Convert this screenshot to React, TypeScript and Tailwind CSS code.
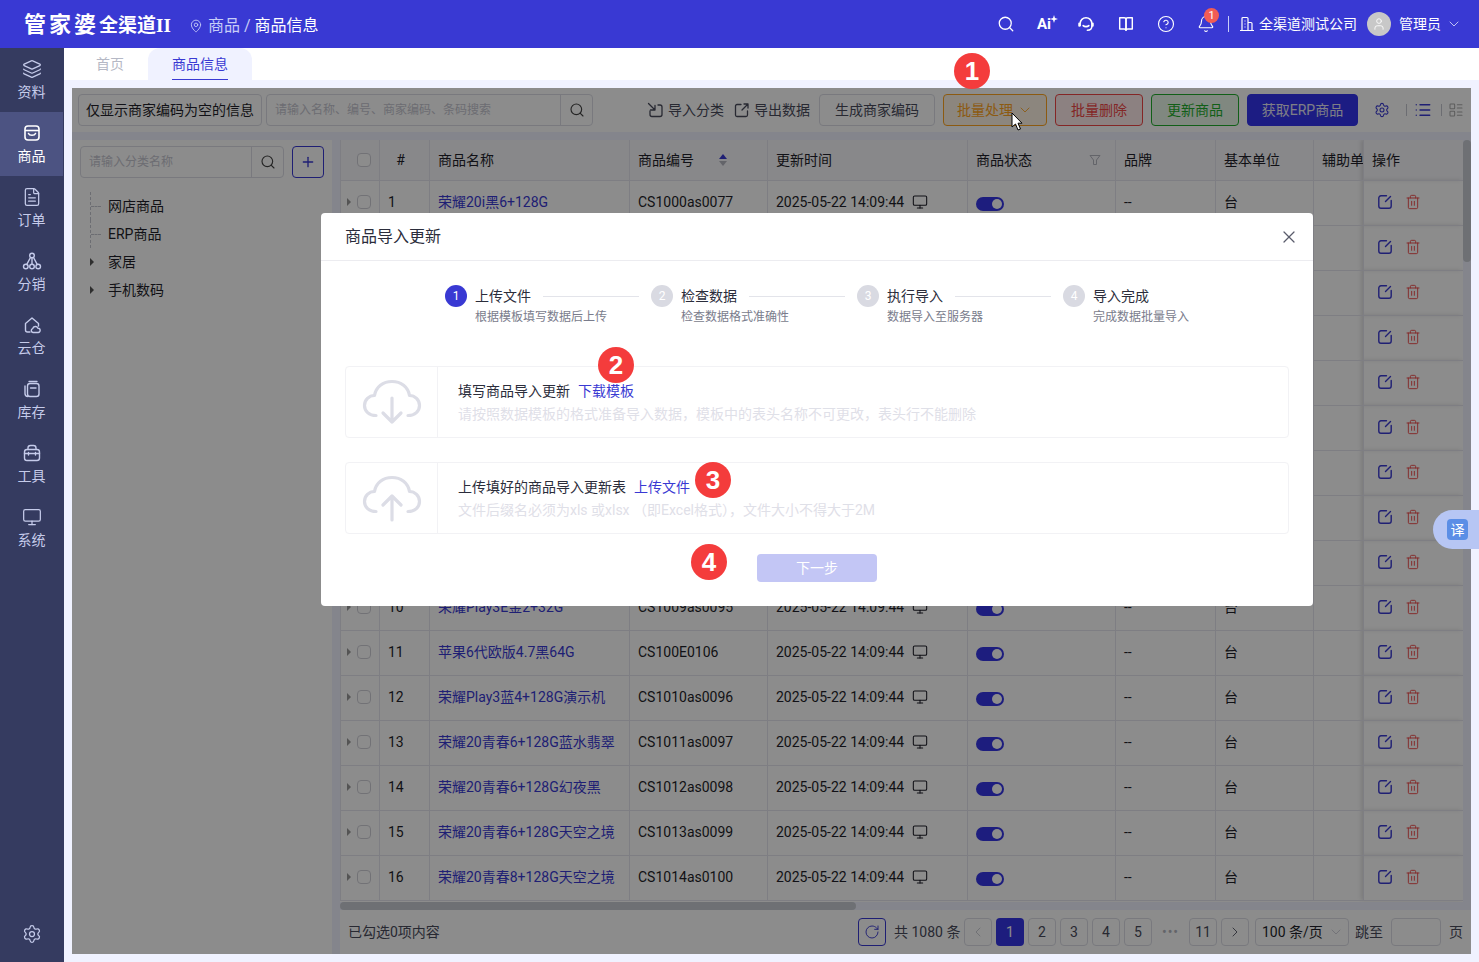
import {
  Search, CircleHelp, Bell, Layers, FileText, Monitor, Settings, ChevronDown, ChevronLeft, ChevronRight,
  Plus, List, X, RotateCw, Trash2, User, MapPin, LayoutList,
} from "lucide-react";

const navItems = [
  { label: "资料", icon: <Layers className="w-5 h-5" strokeWidth={1.5} /> },
  { label: "商品", active: true, icon: <BagIcon /> },
  { label: "订单", icon: <FileText className="w-5 h-5" strokeWidth={1.5} /> },
  { label: "分销", icon: <TreeIcon /> },
  { label: "云仓", icon: <CloudHouseIcon /> },
  { label: "库存", icon: <StockIcon /> },
  { label: "工具", icon: <ToolboxIcon /> },
  { label: "系统", icon: <Monitor className="w-5 h-5" strokeWidth={1.5} /> },
];

const rows = [
  ["荣耀20i黑6+128G", "CS1000as0077"],
  ["荣耀20i蓝6+128G", "CS1001as0078"],
  ["荣耀20i红6+128G", "CS1002as0079"],
  ["荣耀20黑8+128G", "CS1003as0080"],
  ["荣耀20蓝8+128G", "CS1004as0081"],
  ["荣耀Play3黑4+64G", "CS1005as0082"],
  ["荣耀Play3蓝4+64G", "CS1006as0083"],
  ["荣耀Play3E黑2+32G", "CS1007as0084"],
  ["荣耀Play3E蓝2+32G", "CS1008as0085"],
  ["荣耀Play3E金2+32G", "CS1009as0095"],
  ["苹果6代欧版4.7黑64G", "CS100E0106"],
  ["荣耀Play3蓝4+128G演示机", "CS1010as0096"],
  ["荣耀20青春6+128G蓝水翡翠", "CS1011as0097"],
  ["荣耀20青春6+128G幻夜黑", "CS1012as0098"],
  ["荣耀20青春6+128G天空之境", "CS1013as0099"],
  ["荣耀20青春8+128G天空之境", "CS1014as0100"],
];

const steps = [
  { title: "上传文件", sub: "根据模板填写数据后上传" },
  { title: "检查数据", sub: "检查数据格式准确性" },
  { title: "执行导入", sub: "数据导入至服务器" },
  { title: "导入完成", sub: "完成数据批量导入" },
];

function BagIcon() {
  return (
    <svg viewBox="0 0 20 20" className="w-5 h-5" fill="none" stroke="currentColor" strokeWidth="1.6">
      <rect x="3" y="3" width="14" height="14" rx="3" />
      <path d="M3 7.500h14" />
      <path d="M6.500 10.500c1 2.400 6 2.400 7 0" strokeLinecap="round" />
    </svg>
  );
}

function TreeIcon() {
  return (
    <svg viewBox="0 0 20 20" className="w-5 h-5" fill="none" stroke="currentColor" strokeWidth="1.4">
      <circle cx="10" cy="4.500" r="2.300" />
      <circle cx="3.800" cy="15.500" r="2.300" />
      <circle cx="10" cy="15.500" r="2.300" />
      <circle cx="16.200" cy="15.500" r="2.300" />
      <path d="M10 7v6M8.500 6.500l-3.700 6.800M11.500 6.500l3.700 6.800" />
    </svg>
  );
}

function CloudHouseIcon() {
  return (
    <svg viewBox="0 0 20 20" className="w-5 h-5" fill="none" stroke="currentColor" strokeWidth="1.4" strokeLinecap="round" strokeLinejoin="round">
      <path d="M8 17H5.500A2 2 0 0 1 3.500 15V8.500L10 3l6.500 5.500V11" />
      <path d="M11 17.500a2 2 0 0 1-.3-3.900 2.700 2.700 0 0 1 5.200-.3 2.100 2.100 0 0 1 .3 4.200z" />
    </svg>
  );
}

function StockIcon() {
  return (
    <svg viewBox="0 0 20 20" className="w-5 h-5" fill="none" stroke="currentColor" strokeWidth="1.4" strokeLinecap="round">
      <rect x="5.500" y="4.500" width="11.500" height="13" rx="2.500" />
      <path d="M3 7v7.500A3 3 0 0 0 6 17.500" />
      <path d="M7 2.500h8" />
      <path d="M8.500 9h5.500" />
    </svg>
  );
}

function ToolboxIcon() {
  return (
    <svg viewBox="0 0 20 20" className="w-5 h-5" fill="none" stroke="currentColor" strokeWidth="1.4" strokeLinecap="round">
      <rect x="2.500" y="6.500" width="15" height="11" rx="2.500" />
      <path d="M6 6.500V5a2.500 2.500 0 0 1 2.500-2.500h3A2.500 2.500 0 0 1 14 5v1.500" />
      <path d="M2.500 10.500h15M6.500 9.500v2.500M13.500 9.500v2.500" />
    </svg>
  );
}

function HeadsetIcon() {
  return (
    <svg viewBox="0 0 20 20" className="w-[18px] h-[18px]" fill="none" stroke="currentColor" strokeWidth="1.7" strokeLinecap="round">
      <path d="M3.500 12V9.500a6.500 6.500 0 0 1 13 0V12" />
      <path d="M16.500 12.500c0 2.500-2 4.500-5 4.500" />
      <path d="M6.800 11.800c1.500 1.500 4.900 1.500 6.400 0" />
      <path d="M2.500 9.500v2.500M17.500 9.500v2.500" strokeWidth="2.200" />
    </svg>
  );
}

function BookIcon() {
  return (
    <svg viewBox="0 0 20 20" className="w-[18px] h-[18px]" fill="none" stroke="currentColor" strokeWidth="1.6" strokeLinejoin="round">
      <path d="M3 3h5c1 0 2 .6 2 1.600V17c0-.8-1-1.500-2-1.500H3z" />
      <path d="M17 3h-5c-1 0-2 .6-2 1.600V17c0-.8 1-1.500 2-1.500h5z" />
    </svg>
  );
}

function BuildingIcon() {
  return (
    <svg viewBox="0 0 16 16" className="w-4 h-4" fill="none" stroke="currentColor" strokeWidth="1.2">
      <path d="M3 14.500V2.500A1 1 0 0 1 4 1.500h4a1 1 0 0 1 1 1v12" />
      <path d="M9 6.500h3a1 1 0 0 1 1 1v7" />
      <path d="M1 14.500h14M5.500 5h1M5.500 8h1M5.500 11h1" />
    </svg>
  );
}

function EditIcon() {
  return (
    <svg viewBox="0 0 16 16" className="w-4 h-4 text-[#3939d3]" fill="none" stroke="currentColor" strokeWidth="1.4" strokeLinecap="round">
      <path d="M9.500 1.800H4A2.200 2.200 0 0 0 1.800 4v8A2.200 2.200 0 0 0 4 14.200h8a2.200 2.200 0 0 0 2.200-2.200V6.500" />
      <path d="M8.500 7.500l5-5" />
    </svg>
  );
}

function Header() {
  return (
    <header className="h-12 shrink-0 bg-[#3939d3] text-white flex items-center">
      <div className="w-[189px] pl-6 pt-0.5 flex items-baseline text-white font-bold">
        <span className="text-[22px] tracking-[3px] leading-none">管家婆</span>
        <span className="text-[19px] leading-none">全渠道</span>
        <span className="text-[19px] leading-none font-['Liberation_Serif',serif]">II</span>
      </div>
      <MapPin className="w-3.5 h-3.5 mt-1 text-[#c7cdf8]" strokeWidth={1.5} />
      <div className="ml-[5px] mt-1 text-base">
        <span className="text-[#c7cdf8]">商品 / </span>
        <span>商品信息</span>
      </div>
      <div className="ml-auto flex items-center pr-[17px]">
        <div className="flex items-center gap-[22px]">
          <Search className="w-[18px] h-[18px]" strokeWidth={1.7} />
          <div className="w-[18px] flex items-start font-bold text-[15px] leading-none relative">
            Ai
            <svg viewBox="0 0 10 10" className="w-2 h-2 absolute -right-[3px] -top-0.5" fill="currentColor">
              <path d="M5 0l1.200 3.800L10 5 6.200 6.200 5 10 3.800 6.200 0 5l3.800-1.200z" />
            </svg>
          </div>
          <HeadsetIcon />
          <BookIcon />
          <CircleHelp className="w-[18px] h-[18px]" strokeWidth={1.5} />
          <div className="relative">
            <Bell className="w-[18px] h-[18px]" strokeWidth={1.5} />
            <span className="absolute -top-[7px] left-[7px] w-[15px] h-[15px] rounded-full bg-[#f25c54] text-[11px] leading-[15px] text-center">1</span>
          </div>
        </div>
        <div className="ml-[13px] h-4 w-px bg-[#c7cdf8]" />
        <div className="ml-2.5"><BuildingIcon /></div>
        <span className="ml-1 text-sm">全渠道测试公司</span>
        <div className="ml-2.5 w-6 h-6 rounded-full bg-[#c8c8c8] flex items-center justify-center">
          <User className="w-3.5 h-3.5" strokeWidth={1.5} />
        </div>
        <span className="ml-2 text-sm">管理员</span>
        <ChevronDown className="ml-[5px] w-4 h-4 text-[#d5d8fa]" strokeWidth={1.3} />
      </div>
    </header>
  );
}

function Sidebar() {
  return (
    <aside className="w-16 shrink-0 bg-[#353b60] text-[#c5cbea] flex flex-col">
      {navItems.map((item) => (
        <div
          key={item.label}
          className={
            item.active
              ? "w-[63px] h-16 flex flex-col items-center pt-[11px] gap-[3px] bg-[#4c5382] text-white"
              : "w-[63px] h-16 flex flex-col items-center pt-[11px] gap-[3px]"
          }
        >
          {item.icon}
          <span className="text-sm leading-[20px]">{item.label}</span>
        </div>
      ))}
      <div className="mt-auto h-14 flex items-center justify-center">
        <Settings className="w-5 h-5" strokeWidth={1.5} />
      </div>
    </aside>
  );
}

function Tabs() {
  return (
    <div className="h-8 shrink-0 bg-white flex text-sm">
      <div className="w-[84px] pl-8 leading-8 text-[#b5b8c5]">首页</div>
      <div className="w-[104px] bg-[#f0f2ff] rounded-t-xl flex justify-center">
        <span className="h-8 leading-8 text-[#3939d3] border-b border-[#3939d3]">商品信息</span>
      </div>
    </div>
  );
}

function ToolButton({ label, className, caret }: { label: string; className: string; caret?: boolean }) {
  return (
    <button className={`h-8 rounded border text-sm flex items-center justify-center ${className}`}>
      {label}
      {caret && <ChevronDown className="ml-1 w-4 h-4" strokeWidth={1.3} />}
    </button>
  );
}

function Toolbar() {
  return (
    <div className="h-11 shrink-0 bg-white flex items-center pl-1.5 pr-[7px]">
      <button className="h-8 w-[184px] rounded border border-[#dcdde6] text-sm text-[#1f1f2a]">仅显示商家编码为空的信息</button>
      <div className="ml-1 h-8 w-[327px] rounded border border-[#dcdde6] flex items-center">
        <span className="flex-1 pl-2 text-xs text-[#c5c6d0]">请输入名称、编号、商家编码、条码搜索</span>
        <span className="w-8 h-full border-l border-[#dcdde6] flex items-center justify-center">
          <Search className="w-4 h-4 text-[#444]" strokeWidth={1.7} />
        </span>
      </div>
      <div className="ml-auto flex items-center text-sm text-[#4a4c5c]">
        <svg viewBox="0 0 16 16" className="w-4 h-4" fill="none" stroke="currentColor" strokeWidth="1.3" strokeLinecap="round" strokeLinejoin="round">
          <path d="M3 9v3.500A2 2 0 0 0 5 14.500h8a2 2 0 0 0 2-2V5a2 2 0 0 0-2-2h-2" />
          <path d="M1.500 1.500l6.500 6.500M8 3.500V8H3.500" />
        </svg>
        <span className="ml-[5px]">导入分类</span>
        <svg viewBox="0 0 16 16" className="ml-2.5 w-4 h-4" fill="none" stroke="currentColor" strokeWidth="1.3" strokeLinecap="round" strokeLinejoin="round">
          <path d="M7 2.500H3A1.500 1.500 0 0 0 1.500 4v9A1.500 1.500 0 0 0 3 14.500h9a1.500 1.500 0 0 0 1.500-1.500V9" />
          <path d="M8 8l6-6M10 2h4v4" />
        </svg>
        <span className="ml-1">导出数据</span>
        <ToolButton label="生成商家编码" className="ml-[9px] w-[116px] border-[#dcdde6] bg-white" />
        <ToolButton label="批量处理" caret className="ml-2 w-[104px] border-[#ffa51f] bg-[#fff4e5] text-[#ffa51f]" />
        <ToolButton label="批量删除" className="ml-2 w-[88px] border-[#f04545] bg-[#ffecec] text-[#f04545]" />
        <ToolButton label="更新商品" className="ml-2 w-[88px] border-[#1fad2c] bg-[#e9f8ea] text-[#1fad2c]" />
        <ToolButton label="获取ERP商品" className="ml-2 w-[111px] border-[#3333ee] bg-[#3333ee] text-[#e6e6f5]" />
        <Settings className="ml-4 w-4 h-4 text-[#3939d3]" strokeWidth={1.6} />
        <div className="ml-4 w-px h-3 bg-[#c5c6d0]" />
        <List className="ml-[7px] w-[18px] h-[18px] text-[#3939d3]" strokeWidth={1.8} />
        <div className="ml-[9px] w-px h-3 bg-[#c5c6d0]" />
        <LayoutList className="ml-1.5 w-4 h-4 text-[#aaa]" strokeWidth={1.6} />
      </div>
    </div>
  );
}

function CategoryTree() {
  return (
    <div className="w-[260px] shrink-0 bg-white px-2 pt-1.5">
      <div className="flex items-center gap-2">
        <div className="w-[204px] h-8 rounded border border-[#dcdde6] flex items-center">
          <span className="flex-1 pl-2 text-xs text-[#c5c6d0]">请输入分类名称</span>
          <span className="w-8 h-full border-l border-[#dcdde6] flex items-center justify-center">
            <Search className="w-4 h-4 text-[#444]" strokeWidth={1.7} />
          </span>
        </div>
        <button className="w-8 h-8 rounded border border-[#3939d3] flex items-center justify-center text-[#3939d3]">
          <Plus className="w-4 h-4" strokeWidth={2} />
        </button>
      </div>
      <ul className="mt-3.5 text-sm text-[#1f1f2a]">
        {["网店商品", "ERP商品"].map((name) => (
          <li key={name} className="h-7 flex items-center">
            <span className="ml-2.5 w-[18px] h-7 border-l border-dashed border-[#c5c6d0] flex items-center">
              <span className="w-2.5 border-t border-dashed border-[#c5c6d0]" />
            </span>
            {name}
          </li>
        ))}
        {["家居", "手机数码"].map((name) => (
          <li key={name} className="h-7 flex items-center">
            <span className="ml-2.5 w-[18px] flex">
              <span className="border-y-[4px] border-l-[4px] border-y-transparent border-l-[#555]" />
            </span>
            {name}
          </li>
        ))}
      </ul>
    </div>
  );
}

function CheckBox() {
  return <span className="block w-3.5 h-3.5 rounded-sm border border-[#d0d0d8] bg-white" />;
}

function ProductTable() {
  const th = "h-10 px-2 border-r border-b border-[#e6e6ee] font-normal";
  const td = "h-[45px] px-2 pb-0.5 border-r border-b border-[#e6e6ee]";
  return (
    <div className="flex-1 min-w-0 flex flex-col bg-white relative">
      <div className="flex-1 min-h-0 overflow-hidden pr-2">
        <table className="table-fixed w-[1123px] border-collapse text-sm text-left text-[#1f1f2a] border-l border-[#e6e6ee]">
          <colgroup>
            <col className="w-[39px]" />
            <col className="w-[50px]" />
            <col className="w-[200px]" />
            <col className="w-[138px]" />
            <col className="w-[200px]" />
            <col className="w-[148px]" />
            <col className="w-[100px]" />
            <col className="w-[98px]" />
            <col className="w-[50px]" />
            <col className="w-[100px]" />
          </colgroup>
          <thead>
            <tr className="bg-[#f7f7fb]">
              <th className={th}><span className="ml-2 block"><CheckBox /></span></th>
              <th className={`${th} text-center pr-4`}>#</th>
              <th className={th}>商品名称</th>
              <th className={th}>
                <span className="flex items-center justify-between pr-8">
                  商品编号
                  <span className="flex flex-col gap-0.5">
                    <span className="border-x-[4px] border-b-[5px] border-x-transparent border-b-[#3939d3]" />
                    <span className="border-x-[4px] border-t-[5px] border-x-transparent border-t-[#b5b6c0]" />
                  </span>
                </span>
              </th>
              <th className={th}>更新时间</th>
              <th className={th}>
                <span className="flex items-center justify-between pr-1.5">
                  商品状态
                  <svg viewBox="0 0 12 12" className="w-3 h-3 text-[#b5b6c0]" fill="none" stroke="currentColor">
                    <path d="M1 1.500h10L7.500 6v4.500h-3V6z" />
                  </svg>
                </span>
              </th>
              <th className={th}>品牌</th>
              <th className={th}>基本单位</th>
              <th className={`${th} whitespace-nowrap overflow-hidden`}>辅助单位</th>
              <th className={`${th} shadow-[-3px_0_4px_rgba(0,0,0,0.12)]`}>操作</th>
            </tr>
          </thead>
          <tbody>
            {rows.map(([name, code], i) => (
              <tr key={code}>
                <td className={`${td} pl-1.5 pr-0`}>
                  <span className="flex items-center gap-1.5">
                    <span className="border-y-[4px] border-l-[4px] border-y-transparent border-l-[#999]" />
                    <CheckBox />
                  </span>
                </td>
                <td className={td}>{i + 1}</td>
                <td className={`${td} text-[#3939d3] whitespace-nowrap`}>{name}</td>
                <td className={td}>{code}</td>
                <td className={td}>
                  <span className="flex items-center gap-2">
                    2025-05-22 14:09:44
                    <Monitor className="w-4 h-4" strokeWidth={1.6} />
                  </span>
                </td>
                <td className={td}>
                  <span className="mt-1 w-7 h-3.5 rounded-full bg-[#3636e6] flex items-center justify-end pr-0.5">
                    <span className="w-2.5 h-2.5 rounded-full bg-white" />
                  </span>
                </td>
                <td className={td}>--</td>
                <td className={td}>台</td>
                <td className={td}></td>
                <td className={`${td} shadow-[-3px_0_4px_rgba(0,0,0,0.12)]`}>
                  <span className="flex items-center gap-3 pl-[5px]">
                    <EditIcon />
                    <Trash2 className="w-4 h-4 text-[#f04545]" strokeWidth={1.4} />
                  </span>
                </td>
              </tr>
            ))}
          </tbody>
        </table>
      </div>
      {/* scrollbars */}
      <div className="absolute right-0 top-0 bottom-[52px] w-2 bg-[#f0f2ff]">
        <div className="h-[122px] rounded-full bg-[#c9ccd3]" />
      </div>
      <div className="absolute left-0 right-0 bottom-11 h-2 bg-[#f0f2ff]">
        <div className="w-[516px] h-2 rounded-full bg-[#c9ccd3]" />
      </div>
      <Pager />
    </div>
  );
}

function Pager() {
  const cell = "w-7 h-7 rounded border border-[#dcdde6] flex items-center justify-center";
  return (
    <div className="h-11 shrink-0 bg-white flex items-center pl-2 pr-2 text-sm text-[#4a4c5c]">
      <span>已勾选0项内容</span>
      <div className="ml-auto flex items-center">
        <span className="w-7 h-7 rounded border border-[#3939d3] flex items-center justify-center text-[#3939d3]">
          <RotateCw className="w-4 h-4" strokeWidth={1.4} />
        </span>
        <span className="ml-2 w-[66px] whitespace-nowrap">共 1080 条</span>
        <div className="ml-1 flex items-center gap-1">
          <span className={`${cell} text-[#c5c6d0]`}><ChevronLeft className="w-4 h-4" strokeWidth={1.3} /></span>
          <span className="w-7 h-7 rounded bg-[#3636e6] text-white flex items-center justify-center">1</span>
          <span className={cell}>2</span>
          <span className={cell}>3</span>
          <span className={cell}>4</span>
          <span className={cell}>5</span>
          <span className="w-[29px] text-center tracking-[1px] text-[#b5b6c0]">•••</span>
          <span className={cell}>11</span>
          <span className={cell}><ChevronRight className="w-4 h-4" strokeWidth={1.3} /></span>
        </div>
        <div className="ml-1.5 w-[94px] h-7 rounded border border-[#dcdde6] flex items-center pl-1.5 pr-1 text-[#1f1f2a]">
          <span className="flex-1 whitespace-nowrap">100 条/页</span>
          <ChevronDown className="w-4 h-4 text-[#c5c6d0]" strokeWidth={1.2} />
        </div>
        <span className="ml-1.5">跳至</span>
        <span className="ml-2 w-[50px] h-7 rounded border border-[#dcdde6]" />
        <span className="ml-2">页</span>
      </div>
    </div>
  );
}

function UploadRow({ down, title, link, hint }: { down?: boolean; title: string; link: string; hint: string }) {
  return (
    <div className="h-[72px] rounded border border-[#f2f2f5] flex">
      <div className="w-[92px] shrink-0 border-r border-[#f2f2f5] flex items-center justify-center">
        <svg viewBox="0 0 60 48" className="w-[60px] h-12 text-[#dcdde6]" fill="none" stroke="currentColor" strokeWidth="3.200" strokeLinecap="round" strokeLinejoin="round">
          <path d="M14 37.500C7 37.500 2.500 33 2.500 27.500S7 17.500 12.500 17.500C14 9 21 3.500 30 3.500S46 9 47.500 17.500C53 17.500 57.500 22 57.500 27.500S53 37.500 46 37.500" />
          {down ? <path d="M30 20v24M21 35l9 9 9-9" /> : <path d="M30 46V22M21 31l9-9 9 9" />}
        </svg>
      </div>
      <div className="pl-5 pt-3.5 text-sm">
        <div className="leading-5 text-[#2b2d3b]">
          {title}
          <span className="ml-2 text-[#3939d3]">{link}</span>
        </div>
        <div className="mt-[3px] leading-5 text-[#dfe0e8]">{hint}</div>
      </div>
    </div>
  );
}

function ImportModal() {
  return (
    <div className="absolute left-[321px] top-[213px] w-[992px] h-[393px] bg-white rounded">
      <div className="h-12 px-6 pt-px flex items-center justify-between border-b border-[#ececf0]">
        <span className="text-base text-[#2b2d3b]">商品导入更新</span>
        <X className="w-5 h-5 text-[#5a5c6c] -mr-2.5" strokeWidth={1.5} />
      </div>
      <div className="mt-6 ml-[124px] flex">
        {steps.map((s, i) => (
          <div key={s.title} className={i === 3 ? "w-[126px] flex gap-2" : "w-[206px] pr-3 flex gap-2"}>
            <span
              className={
                i === 0
                  ? "w-[22px] h-[22px] shrink-0 rounded-full bg-[#3939d3] text-white text-xs flex items-center justify-center"
                  : "w-[22px] h-[22px] shrink-0 rounded-full bg-[#d9dae2] text-white text-xs flex items-center justify-center"
              }
            >
              {i + 1}
            </span>
            <div className="flex-1 min-w-0">
              <div className="flex items-center gap-3 h-[22px]">
                <span className="text-sm text-[#2b2d3b] whitespace-nowrap">{s.title}</span>
                {i < 3 && <span className="flex-1 h-px bg-[#e3e4ea]" />}
              </div>
              <div className="text-xs leading-[20px] text-[#7a7c8c] whitespace-nowrap">{s.sub}</div>
            </div>
          </div>
        ))}
      </div>
      <div className="mt-[39px] mx-6 flex flex-col gap-6">
        <UploadRow
          down
          title="填写商品导入更新"
          link="下载模板"
          hint="请按照数据模板的格式准备导入数据，模板中的表头名称不可更改，表头行不能删除"
        />
        <UploadRow
          title="上传填好的商品导入更新表"
          link="上传文件"
          hint="文件后缀名必须为xls 或xlsx （即Excel格式），文件大小不得大于2M"
        />
      </div>
      <div className="mt-5 flex justify-center">
        <button className="w-[120px] h-7 rounded-sm bg-[#c3c6f5] text-sm text-white">下一步</button>
      </div>
    </div>
  );
}

function StepBadge({ n, className }: { n: number; className: string }) {
  return (
    <div className={`absolute w-9 h-9 rounded-full bg-[#f43c3c] text-white text-[26px] font-semibold font-['Liberation_Sans',sans-serif] flex items-center justify-center ${className}`}>
      {n}
    </div>
  );
}

export default function App() {
  return (
    <div className="relative w-[1479px] h-[962px] overflow-hidden flex flex-col font-['Roboto','Noto_Sans_CJK_SC',sans-serif]">
      <Header />
      <div className="flex-1 min-h-0 flex">
        <Sidebar />
        <main className="flex-1 min-w-0 flex flex-col bg-[#f0f2ff]">
          <Tabs />
          <div className="flex-1 min-h-0 m-2 flex flex-col relative">
            <Toolbar />
            <div className="flex-1 min-h-0 mt-2 flex gap-2">
              <CategoryTree />
              <ProductTable />
            </div>
            <div className="absolute inset-0 bg-black/45" />
          </div>
        </main>
      </div>

      <ImportModal />

      <StepBadge n={1} className="left-[954px] top-[53px]" />
      <StepBadge n={2} className="left-[598px] top-[347px]" />
      <StepBadge n={3} className="left-[695px] top-[462px]" />
      <StepBadge n={4} className="left-[691px] top-[544px]" />

      {/* mouse pointer */}
      <svg viewBox="0 0 12 19" className="absolute left-[1011px] top-[112px] w-3 h-[19px]">
        <path d="M1 1v14l3.500-3 2.500 6 2.500-1-2.500-5.800H11z" fill="#fff" stroke="#000" strokeWidth="1" />
      </svg>

      {/* translate widget */}
      <div className="absolute left-[1433px] top-[510px] w-[46px] h-[39px] rounded-l-[20px] bg-[#b7c6f4] flex items-center pl-[14px]">
        <span className="w-[21px] h-[21px] rounded bg-[#5b8ee6] text-white text-sm flex items-center justify-center">译</span>
      </div>
    </div>
  );
}
